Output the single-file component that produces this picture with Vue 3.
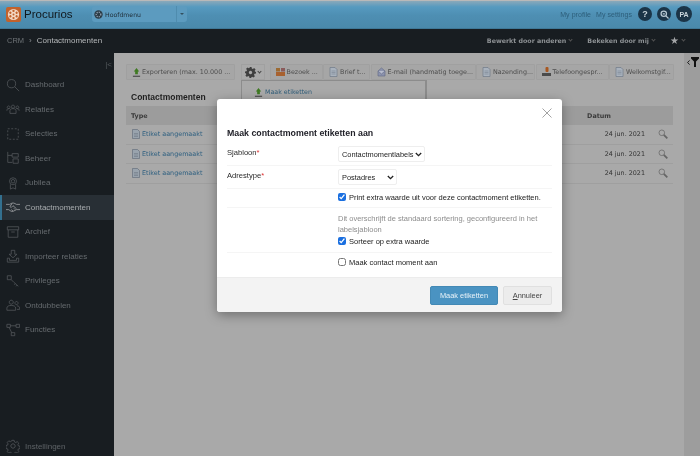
<script setup>
const nav = [
  { label: 'Dashboard', icon: 'M10 10l5 5M11 6.500a4.700 4.700 0 1 1-9.400 0a4.700 4.700 0 0 1 9.400 0z' },
  { label: 'Relaties', icon: 'M3 4.500a1.600 1.600 0 1 0 .01 0M8 3.500a1.800 1.800 0 1 0 .01 0M13 4.500a1.600 1.600 0 1 0 .01 0M1 10c0-2 1-2.500 3-2.500M15 10c0-2-1-2.500-3-2.500M4.500 13v-3c0-1.500 1.500-2.500 3.500-2.500s3.500 1 3.500 2.500v3z' },
  { label: 'Selecties', icon: 'M2 2h12v12H2z', dash: '2.200 1.800' },
  { label: 'Beheer', icon: 'M2 1v8M2 5h5M2 9v4h5M7 3h7v4H7zM8 9h6v5H8z' },
  { label: 'Jubilea', icon: 'M12 6a4 4 0 1 1-8 0a4 4 0 0 1 8 0zM10 6a2 2 0 1 1-4 0a2 2 0 0 1 4 0zM5 9.500V15l3-1.500L11 15V9.500' },
  { label: 'Contactmomenten', active: true, icon: 'M0 5h4l3-1.500h2L12 5h4M0 11h3l3 2h2l4-2h4M7 4L4.500 7.500 6 8.500l2-2 4 3.500M6 11l2 1.500M9 9.500l1.500 1.500' },
  { label: 'Archief', icon: 'M1.500 2h13v3.500h-13zM2.500 5.500V14h11V5.500M6 8h4' },
  { label: 'Importeer relaties', icon: 'M6 1.500h4V6h2.500L8 10 3.500 6H6zM1.500 10.500H4v2.500h8v-2.500h2.500V15h-13z' },
  { label: 'Privileges', icon: 'M1.500 2h4.500v4.500H1.500zM6 6.500l3 3M9 9.500l5 4.500M10.500 11l-1 1.200M12.500 12.800l-1 1.200' },
  { label: 'Ontdubbelen', icon: 'M6 2.500a2.300 2.300 0 1 0 .01 0M1 14v-2.500c0-2 2-3 5-3s5 1 5 3V14zM12 4a1.800 1.800 0 1 0 .01 0M12.500 9c2 0 3 .8 3 2.500V13h-3' },
  { label: 'Functies', icon: 'M1 1.500h4v3.500H1zM11.500 1.500h4v3.500h-4zM6 11h4v3.500H6zM5 3.200h6.500M3.500 5l3 6' },
]
const settingsIcon = 'M8 5.500a2.500 2.500 0 1 0 .01 0M6.700 1.500h2.600l.4 1.900 1.400.6 1.700-1 1.800 1.800-1 1.700.6 1.400 1.800.4v2.600l-1.800.4-.6 1.400 1 1.700-1.800 1.800-1.700-1-1.400.6-.4 1.700H6.700l-.4-1.700-1.400-.6-1.700 1-1.800-1.800 1-1.700-.6-1.400-1.800-.4V7.400l1.800-.4.6-1.400-1-1.700 1.800-1.800 1.700 1 1.400-.6z'
const tools = [
  { label: 'Bezoek ...', kind: 'people', width: 53 },
  { label: 'Brief t...', kind: 'doc', width: 47 },
  { label: 'E-mail (handmatig toege...', kind: 'mail', width: 105 },
  { label: 'Nazending...', kind: 'doc', width: 59 },
  { label: 'Telefoongespr...', kind: 'phone', width: 73 },
  { label: 'Welkomstgif...', kind: 'doc', width: 65 },
]
const rows = [1, 2, 3]
const wheel = [0, 60, 120, 180, 240, 300]
</script>

<template>
  <div class="page">
    <header class="top">
      <div class="logo">
        <svg width="15" height="15" viewBox="0 0 15 15">
          <rect width="15" height="15" rx="2" fill="#c2622c" />
          <circle cx="7.500" cy="7.500" r="5.600" fill="#f3d8c4" />
          <circle v-for="a in wheel" :key="a" cx="7.500" cy="3.900" r="1.150" fill="#c2622c" :transform="`rotate(${a} 7.500 7.500)`" />
          <circle cx="7.500" cy="7.500" r="1" fill="#c2622c" />
        </svg>
        <span>Procurios</span>
      </div>
      <div class="menu-pick">
        <svg width="9" height="9" viewBox="0 0 9 9"><circle cx="4.500" cy="4.500" r="4.200" fill="#2c3d48" /><circle cx="4.500" cy="4.500" r="2.300" fill="none" stroke="#9ab" stroke-width="1.200" stroke-dasharray="1 1" /></svg>
        <span class="menu-text">Hoofdmenu</span>
        <span class="menu-arrow"><i></i></span>
      </div>
      <div class="top-right">
        <span class="top-link">My profile</span>
        <span class="top-link">My settings</span>
        <span class="round">?</span>
        <span class="round">
          <svg width="9" height="9" viewBox="0 0 10 10" fill="none" stroke="#b8c8d2" stroke-width="1.400"><circle cx="4.200" cy="4.200" r="3" /><path d="M6.500 6.500l3 3M3 4.200h2.400" /></svg>
        </span>
        <span class="round big">PA</span>
      </div>
    </header>

    <div class="crumbs">
      <span class="crumb-dim">CRM</span>
      <span class="crumb-sep">›</span>
      <span class="crumb-cur">Contactmomenten</span>
      <div class="crumb-right">
        <span class="crumb-menu">Bewerkt door anderen<i></i></span>
        <span class="crumb-menu">Bekeken door mij<i></i></span>
        <span class="crumb-star">★<i></i></span>
      </div>
    </div>

    <div class="body">
      <aside class="side">
        <div class="collapse">|&lt;</div>
        <nav class="nav">
          <div v-for="n in nav" :key="n.label" class="nav-item" :class="{ active: n.active }">
            <svg width="14" height="14" viewBox="0 0 16 16" fill="none" stroke="currentColor" stroke-width=".85">
              <path :d="n.icon" :stroke-dasharray="n.dash" />
            </svg>
            <span>{{ n.label }}</span>
          </div>
        </nav>
        <div class="nav-item bottom">
          <svg width="14" height="14" viewBox="0 0 16 16" fill="none" stroke="currentColor" stroke-width=".85"><path :d="settingsIcon" /></svg>
          <span>Instellingen</span>
        </div>
      </aside>

      <main class="main">
        <div class="toolbar">
          <div class="tool export">
            <svg width="9" height="9" viewBox="0 0 10 10"><path d="M5 0l3 4H6.500v3h-3V4H2z" fill="#3f7a22" /><path d="M1 8.500h8V10H1z" fill="#555" /></svg>
            <span>Exporteren (max. 10.000 ...</span>
          </div>
          <div class="gear">
            <svg width="11" height="11" viewBox="0 0 16 16"><path d="M6.500 0h3l.4 2.200 1.500.7 1.900-1.300 2.100 2.100-1.300 1.900.7 1.500L16 6.500v3l-2.200.4-.7 1.500 1.300 1.900-2.100 2.100-1.900-1.300-1.500.7L9.500 16h-3l-.4-2.200-1.500-.7-1.900 1.300-2.100-2.100 1.300-1.900-.7-1.500L0 9.500v-3l2.200-.4.700-1.500L1.600 2.700l2.100-2.100 1.900 1.300 1.500-.7zM8 5.500a2.500 2.500 0 1 0 .01 0z" fill="#3f3f3f" fill-rule="evenodd" /></svg>
            <i class="chev"></i>
          </div>
          <div class="tool-group">
            <div v-for="t in tools" :key="t.label" class="tool" :style="{ width: t.width + 'px' }">
              <svg width="9" height="10" viewBox="0 0 9 10">
                <g v-if="t.kind === 'people'"><rect y="1" width="4" height="3.500" fill="#9c6a32" /><rect x="5" y="1" width="4" height="3.500" fill="#8a5a5a" /><rect y="5" width="9" height="4" fill="#a8612f" /></g>
                <g v-else-if="t.kind === 'mail'"><path d="M1 4l3.500-3L8 4v5H1z" fill="#8c93ad" stroke="#5e6685" stroke-width=".6" /><path d="M1 4l3.500 3L8 4" fill="#b7bccd" stroke="#5e6685" stroke-width=".6" /></g>
                <g v-else-if="t.kind === 'phone'"><rect x="3.500" y="0" width="3" height="5" rx="1" fill="#a8571f" /><path d="M0 6h9v3H0z" fill="#4b4b4b" /></g>
                <g v-else><path d="M1 .5h5l2 2v7H1z" fill="#a9b2bd" stroke="#6e7a88" stroke-width=".7" /><path d="M2.500 4h4M2.500 5.500h4M2.500 7h4" stroke="#6e7a88" stroke-width=".5" /></g>
              </svg>
              <span>{{ t.label }}</span>
            </div>
          </div>
        </div>

        <div class="drop">
          <svg width="9" height="9" viewBox="0 0 10 10"><path d="M5 0l3 4H6.500v3h-3V4H2z" fill="#3f7a22" /><path d="M1 8.500h8V10H1z" fill="#555" /></svg>
          <span>Maak etiketten</span>
        </div>

        <h2 class="list-title">Contactmomenten</h2>
        <div class="table">
          <div class="thead">
            <span>Type</span>
            <span class="th-date">Datum</span>
          </div>
          <div v-for="r in rows" :key="r" class="trow">
            <span class="type">
              <svg width="8" height="10" viewBox="0 0 8 10"><path d="M.5.500h5l2 2v7h-7z" fill="#99a3ad" stroke="#66707c" stroke-width=".7" /><path d="M2 4.500h4M2 6h4M2 7.500h4" stroke="#66707c" stroke-width=".5" /></svg>
              <span>Etiket aangemaakt</span>
            </span>
            <span class="date">24 jun. 2021</span>
            <svg class="mag" width="10" height="10" viewBox="0 0 10 10" fill="none"><circle cx="3.800" cy="3.800" r="2.800" stroke="#777" stroke-width="1" /><path d="M5.800 5.800L9.300 9.300" stroke="#666" stroke-width="1.800" /></svg>
          </div>
        </div>
      </main>

      <aside class="filter">
        <div class="filter-head">
          <svg width="3" height="5" viewBox="0 0 3 5" fill="none" stroke="#111" stroke-width=".9"><path d="M2.600.4L.6 2.500l2 2.100" /></svg>
          <svg width="8" height="10" viewBox="0 0 8 10"><path d="M0 0h8v1.500L5 4.500V10H3V4.500L0 1.500z" fill="#111" /></svg>
        </div>
      </aside>
    </div>

    <div class="layer">
      <section class="modal">
        <div class="modal-body">
          <div class="close">
            <svg width="10" height="10" viewBox="0 0 10 10" stroke="#a3a3a3" stroke-width="1" fill="none"><path d="M.5.500l9 9M9.500.500l-9 9" /></svg>
          </div>
          <h3 class="modal-title">Maak contactmoment etiketten aan</h3>
          <div class="form-row r1">
            <label class="f-label">Sjabloon<b>*</b></label>
            <div class="select-wrap w1">
              <select class="sel"><option>Contactmomentlabels</option></select>
              <svg width="7" height="5" viewBox="0 0 7 5" fill="none" stroke="#222" stroke-width="1.300"><path d="M.8 1l2.700 2.700L6.200 1" /></svg>
            </div>
          </div>
          <div class="form-row r2">
            <label class="f-label">Adrestype<b>*</b></label>
            <div class="select-wrap w2">
              <select class="sel"><option>Postadres</option></select>
              <svg width="7" height="5" viewBox="0 0 7 5" fill="none" stroke="#222" stroke-width="1.300"><path d="M.8 1l2.700 2.700L6.200 1" /></svg>
            </div>
          </div>
          <div class="form-row r3">
            <span class="f-label"></span>
            <label class="check"><input type="checkbox" checked /><span>Print extra waarde uit voor deze contactmoment etiketten.</span></label>
          </div>
          <div class="form-row r4">
            <span class="f-label"></span>
            <div>
              <p class="note">Dit overschrijft de standaard sortering, geconfigureerd in het labelsjabloon</p>
              <label class="check"><input type="checkbox" checked /><span>Sorteer op extra waarde</span></label>
            </div>
          </div>
          <div class="form-row r5">
            <span class="f-label"></span>
            <label class="check"><input type="checkbox" /><span>Maak contact moment aan</span></label>
          </div>
        </div>
        <footer class="modal-foot">
          <button class="btn primary">Maak etiketten</button>
          <button class="btn plain"><u>A</u>nnuleer</button>
        </footer>
      </section>
    </div>
  </div>
</template>

<style>
html, body { margin: 0; background: #a9a9a9; }
</style>

<style scoped>
.page { position: relative; width: 700px; height: 456px; overflow: hidden; font-family: "Liberation Sans", Arial, sans-serif; background: #181d21; filter: blur(.45px); }
.top { border-top: 1px solid #b9b9b9; border-bottom: 1px solid #3f7897; background: linear-gradient(#8aa9ba, #569abf 6px, #4e8fb3 14px, #4a89ab); display: flex; align-items: center; padding: 0 8px 1px 6px; height: 26px; }
.logo { display: flex; align-items: center; gap: 3px; width: 86px; font-size: 11.500px; color: #10181d; }
.menu-pick { width: 95px; height: 16px; background: #5c9bbf; border-radius: 3px; display: flex; align-items: center; padding-left: 2px; box-sizing: border-box; gap: 2px; }
.menu-text { flex: 1; font: 6.200px "DejaVu Sans", sans-serif; color: #1f2e38; }
.menu-arrow { width: 10px; height: 100%; border-left: 1px solid #4f8cae; display: flex; align-items: center; justify-content: center; }
.menu-arrow i { border-top: 2px solid #33505f; border-left: 2px solid transparent; border-right: 2px solid transparent; }
.top-right { margin-left: auto; display: flex; align-items: center; }
.top-link { font-size: 7px; color: #2d5e7a; margin-right: 5px; letter-spacing: .05px; }
.round { width: 14px; height: 14px; border-radius: 50%; background: #1b3447; color: #c8d3da; font: bold 9px "Liberation Sans", sans-serif; display: flex; align-items: center; justify-content: center; margin-left: 5px; }
.top-link + .round { margin-left: 1px; }
.round.big { width: 16px; height: 16px; font-size: 7px; }
.crumbs { height: 24px; display: flex; align-items: center; padding: 0 15px 2px 7px; box-sizing: border-box; font-size: 7.500px; background: #181d21; }
.crumb-dim { color: #6f7478; }
.crumb-sep { margin: 0 5px; color: #8a8e91; font-size: 8px; }
.crumb-cur { font-size: 8px; color: #b4b7b9; }
.crumb-right { margin-left: auto; display: flex; align-items: center; gap: 15px; }
.crumb-menu { font: bold 6.300px "DejaVu Sans", sans-serif; color: #8d9194; display: flex; align-items: center; gap: 3px; }
.crumb-menu i, .crumb-star i { width: 2px; height: 2px; border-right: 1px solid #555; border-bottom: 1px solid #555; transform: rotate(45deg); margin-top: -2px; }
.crumb-star { color: #a4a6a8; font-size: 10px; display: flex; align-items: center; gap: 3px; }
.body { display: flex; height: 404px; }
.side { width: 114px; flex: none; background: #181d21; display: flex; flex-direction: column; }
.collapse { text-align: right; font-size: 8px; color: #53585c; padding: 6px 2px 0 0; height: 11px; line-height: 11px; }
.nav { margin-top: 2.500px; }
.nav-item { height: 24.500px; display: flex; align-items: center; gap: 5px; padding-left: 6px; font-size: 8px; color: #666b6f; }
.nav-item svg { color: #565b5f; flex: none; }
.nav-item.active { background: #282f35; color: #a9adb0; box-shadow: inset 2px 0 0 #33708f; }
.nav-item.active svg { color: #a4a7aa; }
.bottom { margin-top: auto; height: 22px; color: #5e6367; }
.main { flex: 1; background: #a9a9a9; position: relative; padding: 11px 10px 0 12px; min-width: 0; font-family: "DejaVu Sans", sans-serif; }
.toolbar { display: flex; height: 16px; }
.tool { height: 16px; box-sizing: border-box; display: flex; align-items: center; gap: 2px; padding: 0 1px 0 5px; background: #a6a6a6; border: 1px solid #a0a0a0; border-radius: 1px; font-size: 6.400px; color: #4d4d4d; white-space: nowrap; overflow: hidden; flex: none; }
.tool svg { flex: none; }
.export { width: 109px; gap: 1px; }
.gear { width: 24px; margin-left: 6px; height: 16px; box-sizing: border-box; border: 1px solid #a0a0a0; display: flex; align-items: center; justify-content: center; gap: 2px; }
.chev { width: 2px; height: 2px; border-right: 1px solid #444; border-bottom: 1px solid #444; transform: rotate(45deg); margin-top: -1px; }
.tool-group { display: flex; margin-left: 5px; gap: .500px; }
.drop { position: absolute; left: 127px; top: 27px; width: 186px; height: 30px; box-sizing: border-box; border: 1px solid #8c8c8c; border-right-width: 2px; background: #a9a9a9; display: flex; align-items: flex-start; gap: 2px; padding: 7px 0 0 12px; font-size: 6.300px; color: #2d5b78; }
.list-title { margin: 11px 0 0 5px; font: bold 8.500px/13px "Liberation Sans", sans-serif; color: #1f1f1f; }
.table { margin-top: 2px; width: 547px; font-size: 6.400px; color: #333; }
.thead { height: 19px; background: #9c9c9c; display: flex; align-items: center; padding-left: 5px; font-weight: bold; color: #3a3a3a; }
.th-date { margin-left: auto; margin-right: 62px; }
.trow { height: 19.500px; display: flex; align-items: center; border-bottom: 1px solid #9f9f9f; box-sizing: border-box; padding-left: 6px; }
.type { display: flex; align-items: center; gap: 2px; color: #2f6080; }
.date { margin-left: auto; color: #333; }
.mag { margin: 0 5px 0 13px; }
.filter { width: 16px; flex: none; background: #9d9d9d; }
.filter-head { display: flex; align-items: center; height: 10px; margin-top: 4px; padding-left: 3px; gap: 1px; }
.layer { position: absolute; inset: 0; display: flex; align-items: flex-start; padding: 99px 0 0 217px; box-sizing: border-box; }
.modal { width: 345px; height: 213px; background: #fff; border-radius: 3px; box-shadow: 0 3px 12px rgba(0,0,0,.35); display: flex; flex-direction: column; overflow: hidden; position: relative; flex: none; }
.modal-body { flex: 1; padding: 0 10px; position: relative; font-size: 7.500px; color: #222; }
.close { position: absolute; right: 10px; top: 9px; height: 10px; }
.modal-title { margin: 0; padding-top: 27px; font: bold 8.800px/14px "Liberation Sans", sans-serif; color: #22222a; }
.form-row { display: flex; box-sizing: border-box; border-bottom: 1px solid #f5f5f5; }
.r1 { margin-top: 6px; height: 20px; }
.r2 { height: 23px; padding-top: 3px; }
.r3 { height: 19px; padding-top: 2px; }
.r4 { height: 45px; padding-top: 5px; }
.r5 { height: 20px; padding-top: 3px; border-bottom: 0; }
.f-label { width: 111px; flex: none; line-height: 14px; font-size: 7.600px; color: #2a2a2a; }
.f-label b { color: #d33; font-weight: normal; }
.select-wrap { position: relative; height: 16px; }
.select-wrap svg { position: absolute; right: 3px; top: 6px; pointer-events: none; }
.w1 { width: 87px; }
.w2 { width: 59px; }
.sel { appearance: none; width: 100%; height: 16px; border: 1px solid #eeeeee; border-radius: 2px; background: #fff; font: 7.400px "Liberation Sans", sans-serif; color: #222; padding: 0 0 0 3px; display: block; }
.check { display: flex; align-items: center; gap: 3px; height: 12px; color: #222; white-space: nowrap; }
.check input { margin: 0; width: 8px; height: 8px; accent-color: #1a6fe0; flex: none; }
.note { margin: 0; width: 210px; line-height: 11px; color: #8d8d8d; }
.modal-foot { height: 35px; background: #f3f3f3; border-top: 1px solid #ececec; box-sizing: border-box; display: flex; justify-content: flex-end; align-items: center; gap: 5px; padding: 0 10px 0 0; }
.btn { height: 19px; border-radius: 2px; font: 7.400px "Liberation Sans", sans-serif; padding: 0; }
.primary { width: 68px; background: #4a93c2; border: 1px solid #4389b5; color: #e8f2f8; }
.plain { width: 49px; background: #ececec; border: 1px solid #e0e0e0; color: #444; }
</style>
